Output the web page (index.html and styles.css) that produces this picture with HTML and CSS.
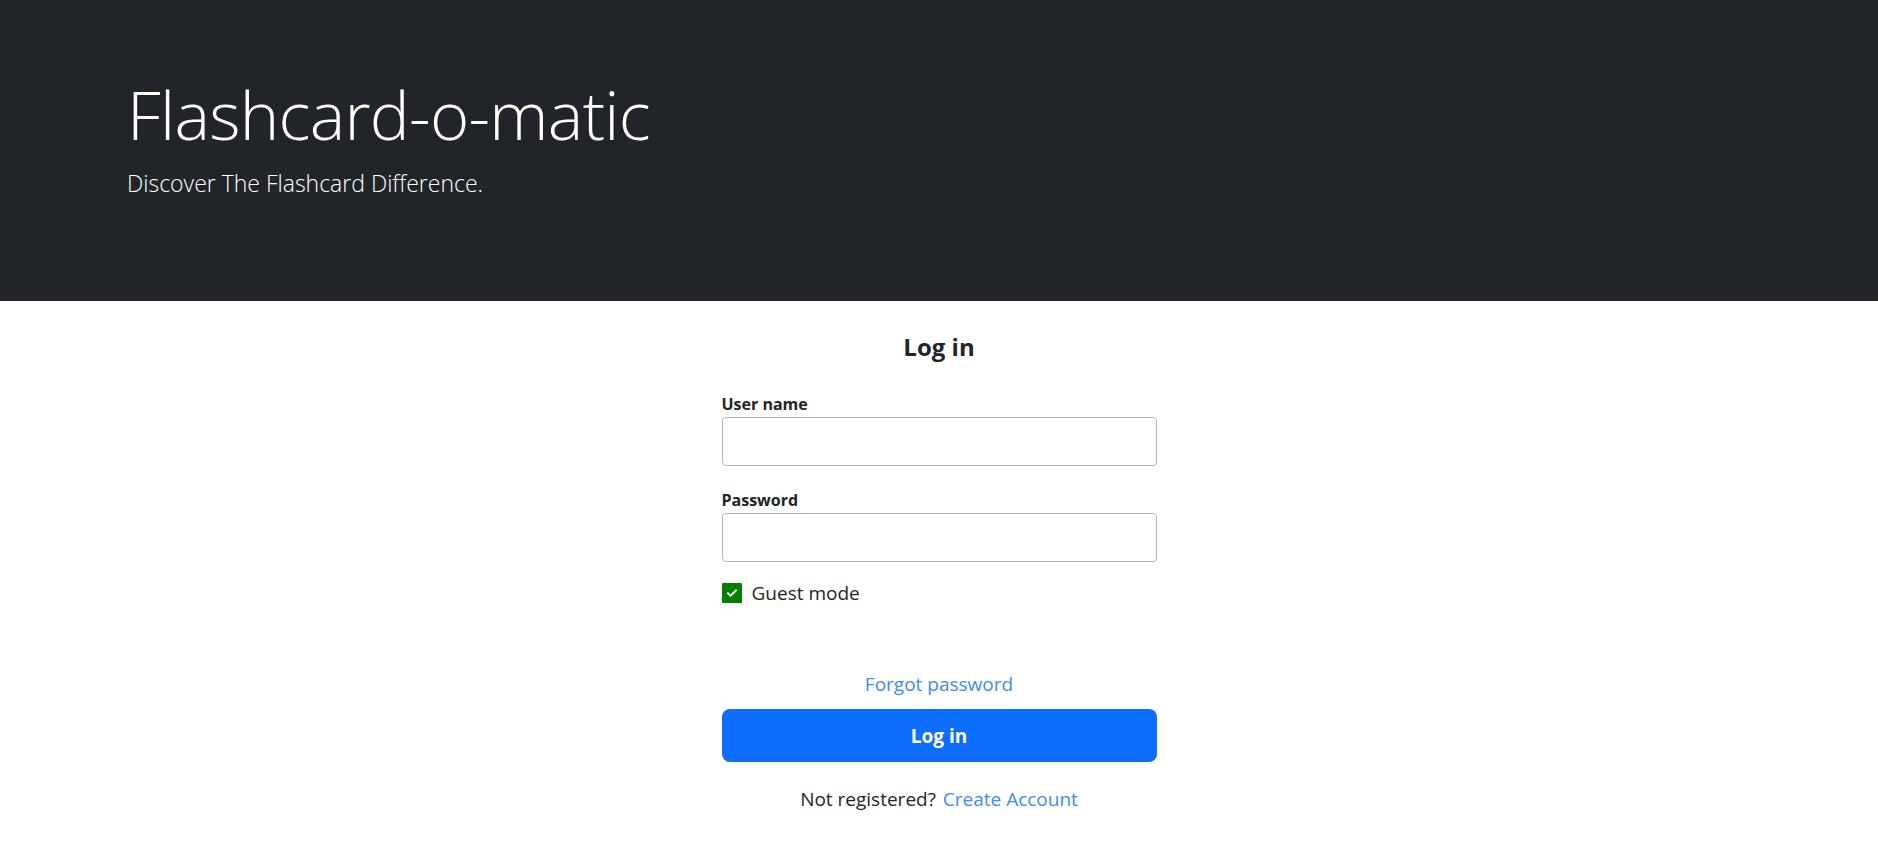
FILE: index.html
```html
<!DOCTYPE html>
<html lang="en">
<head>
<meta charset="utf-8">
<title>Flashcard-o-matic</title>
<link rel="stylesheet" href="styles.css">
</head>
<body>
<header class="hero">
  <h1 class="hero-title">Flashcard-o-matic</h1>
  <p class="hero-lead">Discover The Flashcard Difference.</p>
</header>
<main class="login">
  <h2 class="login-title">Log in</h2>
  <form class="login-form">
    <label class="field-label" for="user">User name</label>
    <input class="field-input" id="user" type="text">
    <label class="field-label" for="pass">Password</label>
    <input class="field-input field-last" id="pass" type="password">
    <div class="check-row">
      <span class="check-box">
        <svg viewBox="0 0 20 20" width="20" height="20"><path d="M6 10.2l2.6 2.6L14 7.4" fill="none" stroke="#fff" stroke-width="2" stroke-linecap="round" stroke-linejoin="round"/></svg>
      </span>
      <span class="check-label">Guest mode</span>
    </div>
    <a class="forgot" href="#">Forgot password</a>
    <button class="submit" type="button">Log in</button>
    <p class="register">Not registered? <a href="#">Create Account</a></p>
  </form>
</main>
</body>
</html>
```
FILE: styles.css
```css
* { box-sizing: border-box; }
body {
  margin: 0;
  font-family: "Open Sans", "Noto Sans", sans-serif;
  color: #212529;
  background: #fff;
}
.hero {
  background: #212529;
  color: #fff;
  height: 301px;
  padding: 71px 0 0 127px;
}
.hero-title {
  margin: 0;
  font-size: 67px;
  font-weight: 300;
  line-height: 86px;
  letter-spacing: -0.7px;
}
.hero-lead {
  margin: 11px 0 0;
  font-size: 23px;
  font-weight: 300;
  line-height: 30px;
}
.login {
  width: 435px;
  margin: 0 auto;
  padding-top: 31px;
}
.login-title {
  margin: 0 0 33px;
  text-align: center;
  font-size: 24px;
  font-weight: 700;
  line-height: 29px;
}
.login-form {
  display: flex;
  flex-direction: column;
}
.field-label {
  font-size: 16px;
  font-weight: 700;
  line-height: 20px;
  margin-bottom: 3px;
}
.field-input {
  height: 49px;
  border: 1px solid #adb5bd;
  border-radius: 4px;
  margin-bottom: 24px;
  font-size: 18px;
  padding: 0 12px;
}
.field-last { margin-bottom: 19px; }
.check-row {
  display: flex;
  align-items: center;
  gap: 10px;
  height: 24px;
}
.check-box {
  width: 20px;
  height: 20px;
  background: #008000;
  border-radius: 1px;
  display: flex;
}
.check-label {
  font-size: 19px;
  line-height: 24px;
}
.forgot {
  margin-top: 67px;
  align-self: center;
  font-size: 19px;
  line-height: 24px;
  color: #3d8bfd;
  text-decoration: none;
}
.submit {
  margin-top: 13px;
  height: 53px;
  border: none;
  border-radius: 8px;
  background: #0d6efd;
  color: #fff;
  font-family: inherit;
  font-size: 19px;
  font-weight: 700;
}
.register {
  margin: 25px 0 0;
  text-align: center;
  font-size: 19px;
  line-height: 24px;
}
.register a {
  color: #3d8bfd;
  text-decoration: none;
  margin-left: 2px;
}
```
